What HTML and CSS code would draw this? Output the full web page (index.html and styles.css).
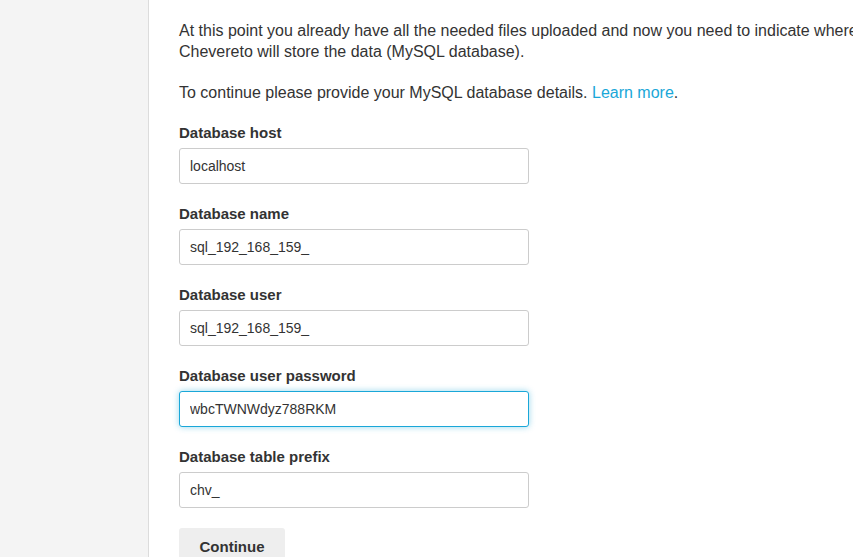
FILE: index.html
```html
<!DOCTYPE html>
<html>
<head>
<meta charset="utf-8">
<link rel="stylesheet" href="styles.css">
</head>
<body>
<div class="layout">
  <aside class="sidebar"></aside>
  <main class="content">
    <p class="intro">At this point you already have all the needed files uploaded and now you need to indicate where Chevereto will store the data (MySQL database).</p>
    <p class="intro">To continue please provide your MySQL database details. <a href="#" class="link">Learn more</a>.</p>
    <form class="form">
      <div class="field">
        <label class="label">Database host</label>
        <input class="input" type="text" value="localhost">
      </div>
      <div class="field">
        <label class="label">Database name</label>
        <input class="input" type="text" value="sql_192_168_159_">
      </div>
      <div class="field">
        <label class="label">Database user</label>
        <input class="input" type="text" value="sql_192_168_159_">
      </div>
      <div class="field">
        <label class="label">Database user password</label>
        <input class="input input-focus" type="text" value="wbcTWNWdyz788RKM">
      </div>
      <div class="field">
        <label class="label">Database table prefix</label>
        <input class="input" type="text" value="chv_">
      </div>
      <div class="actions">
        <button class="button" type="button">Continue</button>
      </div>
    </form>
  </main>
</div>
</body>
</html>
```
FILE: styles.css
```css
html, body {
  margin: 0;
  padding: 0;
  height: 100%;
  overflow: hidden;
  background: #fff;
}
body {
  font-family: "Liberation Sans", Arial, Helvetica, sans-serif;
  color: #333;
}
.layout {
  display: flex;
  min-height: 100%;
}
.sidebar {
  width: 148px;
  flex: none;
  background: #f4f4f4;
  border-right: 1px solid #dcdcdc;
}
.content {
  flex: 1;
  padding: 20px 0 0 30px;
  white-space: nowrap;
  overflow: hidden;
}
.intro {
  margin: 0 0 20px 0;
  font-size: 16px;
  line-height: 21px;
  white-space: normal;
  width: 700px;
}
.link {
  color: #1aa7d8;
  text-decoration: none;
}
.form {
  display: flex;
  flex-direction: column;
}
.field {
  display: flex;
  flex-direction: column;
  margin-bottom: 20px;
}
.label {
  font-size: 15px;
  font-weight: bold;
  line-height: 18px;
  margin-top: 1px;
  margin-bottom: 6px;
}
.input {
  box-sizing: border-box;
  width: 350px;
  height: 36px;
  border: 1px solid #cccccc;
  border-radius: 3px;
  padding: 0 10px;
  font-family: "Liberation Sans", Arial, Helvetica, sans-serif;
  font-size: 14px;
  color: #333;
  background: #fff;
  outline: none;
}
.input-focus {
  border-color: #1aa7d8;
  box-shadow: 0 0 6px rgba(26, 167, 216, 0.45);
}
.actions {
  display: flex;
}
.button {
  width: 106px;
  height: 40px;
  border: none;
  border-radius: 3px;
  background: #eeeeee;
  font-family: "Liberation Sans", Arial, Helvetica, sans-serif;
  font-size: 15px;
  font-weight: bold;
  color: #333;
  padding: 0 0 4px 0;
}
```
